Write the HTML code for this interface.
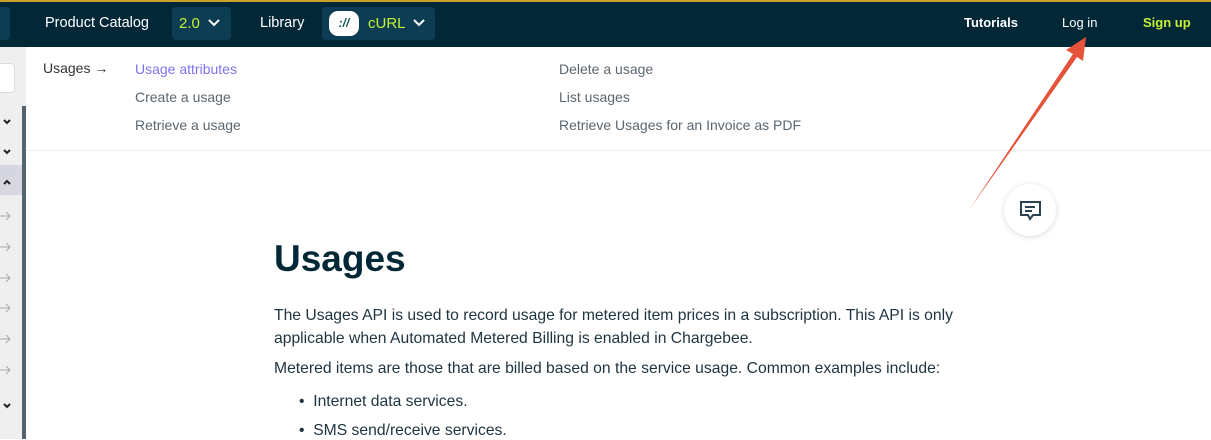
<!DOCTYPE html>
<html><head><style>
*{margin:0;padding:0;box-sizing:border-box}
body{width:1211px;height:439px;overflow:hidden;background:#fff;font-family:"Liberation Sans",sans-serif;position:relative}
.hdr{position:absolute;left:0;top:0;width:1211px;height:47px;background:#022838;border-top:2px solid #c9a227;color:#fff;font-size:14.5px}
.hdr span{position:absolute;top:13px}
.pill{position:absolute;top:5px;height:33px;background:#0c3d52;border-radius:4px}
.g{color:#c5f033}
.side{position:absolute;left:0;top:47px;width:26px;height:392px;background:#efefef}
.sb{position:absolute;left:22px;top:106px;width:4px;height:333px;background:#56636d}
.m{position:absolute;font-size:14px;color:#5b6770}
.body{position:absolute;left:274px;color:#1e3440;font-size:15.7px}
</style></head><body>
<div class="hdr">
 <div class="pill" style="left:-10px;width:20px"></div>
 <span style="left:45px">Product Catalog</span>
 <div class="pill" style="left:172px;width:59px"></div>
 <span class="g" style="left:179px;font-size:15px">2.0</span>
 <svg style="position:absolute;left:207px;top:16px" width="14" height="10"><path d="M2 2l5 5 5-5" stroke="#fff" stroke-width="2" fill="none"/></svg>
 <span style="left:260px">Library</span>
 <div class="pill" style="left:322px;width:113px"></div>
 <div style="position:absolute;left:329px;top:9px;width:30px;height:25px;background:#fff;border-radius:9px;color:#155;font-size:12px;font-weight:bold;text-align:center;line-height:25px;font-style:italic">://</div>
 <span class="g" style="left:368px;font-size:15px">cURL</span>
 <svg style="position:absolute;left:412px;top:16px" width="14" height="10"><path d="M2 2l5 5 5-5" stroke="#fff" stroke-width="2" fill="none"/></svg>
 <span style="left:964px;font-size:13px;font-weight:bold">Tutorials</span>
 <span style="left:1062px;font-size:13px">Log in</span>
 <span class="g" style="left:1143px;font-size:13px;font-weight:bold">Sign up</span>
</div>
<div class="side">
 <div style="position:absolute;left:-6px;top:16px;width:21px;height:30px;background:#fff;border:1px solid #ddd;border-radius:4px"></div>
 <div style="position:absolute;left:0;top:118px;width:22px;height:30px;background:#d6d6e0"></div>
</div>
<div class="sb"></div>
<svg style="position:absolute;left:0;top:110px" width="22" height="310" fill="none" stroke="#222" stroke-width="2">
<path d="M4 10l3 3 3-3M4 40l3 3 3-3M4 74l3-3 3 3M4 294l3 3 3-3"/>
<g stroke="#aaa" stroke-width="1"><path d="M0 106h10M6 102l4 4-4 4M0 137h10M6 133l4 4-4 4M0 168h10M6 164l4 4-4 4M0 198h10M6 194l4 4-4 4M0 229h10M6 225l4 4-4 4M0 260h10M6 256l4 4-4 4"/></g>
</svg>
<div style="position:absolute;left:26px;top:150px;width:1185px;height:1px;background:#eee"></div>
<div class="m" style="left:43px;top:60px;color:#333">Usages →</div>
<div class="m" style="left:135px;top:61px;color:#7d72f0">Usage attributes</div>
<div class="m" style="left:135px;top:89px">Create a usage</div>
<div class="m" style="left:135px;top:117px">Retrieve a usage</div>
<div class="m" style="left:559px;top:61px">Delete a usage</div>
<div class="m" style="left:559px;top:89px">List usages</div>
<div class="m" style="left:559px;top:117px">Retrieve Usages for an Invoice as PDF</div>
<div style="position:absolute;left:1004px;top:184px;width:52px;height:52px;border-radius:50%;background:#fff;box-shadow:0 1px 6px rgba(0,0,0,.15)"></div>
<svg style="position:absolute;left:1019px;top:200px" width="24" height="24" fill="none" stroke="#2c4250" stroke-width="2"><path d="M2 2h19v13h-7l-3 4-2-4H2z M6 7h10M6 11h7"/></svg>
<div style="position:absolute;left:274px;top:238px;font-size:37px;font-weight:bold;color:#022838">Usages</div>
<div class="body" style="top:304px;line-height:23px">The Usages API is used to record usage for metered item prices in a subscription. This API is only<br>applicable when Automated Metered Billing is enabled in Chargebee.</div>
<div class="body" style="top:360px">Metered items are those that are billed based on the service usage. Common examples include:</div>
<div class="body" style="top:393px;left:299px">•&nbsp; Internet data services.</div>
<div class="body" style="top:422px;left:299px">•&nbsp; SMS send/receive services.</div>
<svg style="position:absolute;left:0;top:0" width="1211" height="439"><path d="M969 210 L1073 54 L1066 50 L1086 37 L1083 61 L1077 57 Z" fill="#e5533b"/></svg>
</body></html>
